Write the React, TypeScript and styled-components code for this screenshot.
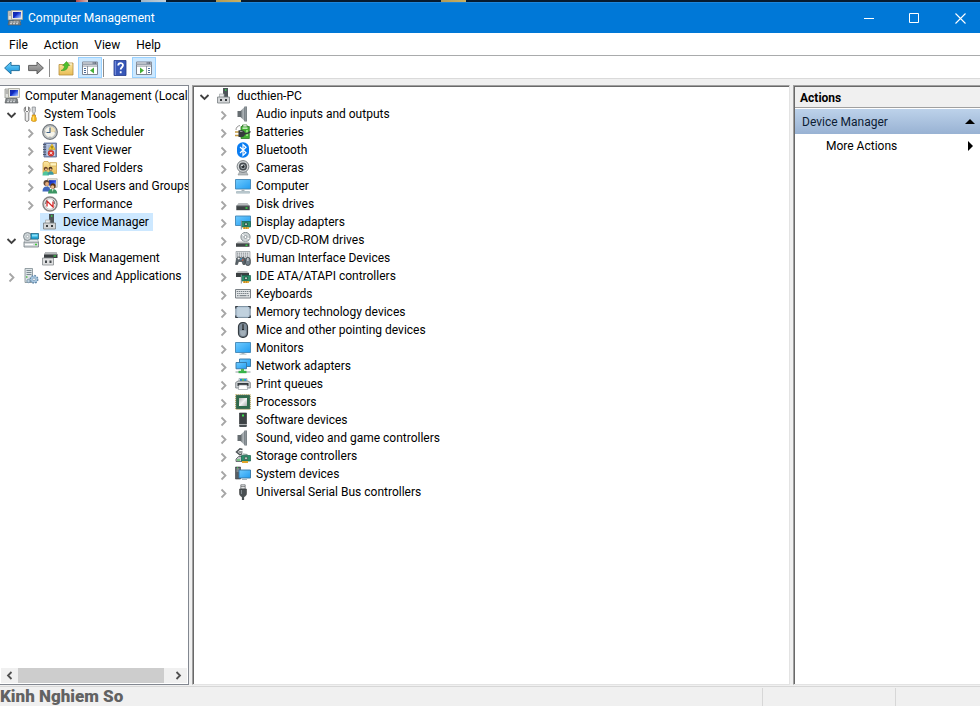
import React from "react";
import styled, { createGlobalStyle } from "styled-components";

const GlobalStyle = createGlobalStyle`
  * { box-sizing: border-box; }
  html, body { margin: 0; padding: 0; }
  body { font-family: Roboto, "Open Sans", sans-serif; font-size: 12px; line-height: 18px; color: #000; background: #f0f0f0; }
  button { font: inherit; color: inherit; background: none; border: 0; padding: 0; margin: 0; }
  ul { list-style: none; margin: 0; padding: 0; }
`;

/* ---------- icons ---------- */

const Svg = styled.svg<{ $w?: number; $h?: number }>`
  display: block;
  flex: none;
  width: ${(p) => p.$w ?? 16}px;
  height: ${(p) => p.$h ?? 16}px;
`;

const Icon = ({ children, w = 16, h = 16 }: { children: React.ReactNode; w?: number; h?: number }) => (
  <Svg viewBox={`0 0 ${w} ${h}`} $w={w} $h={h} aria-hidden="true">
    {children}
  </Svg>
);

const Defs = () => (
  <DefsSvg aria-hidden="true">
    <defs>
      <linearGradient id="screen" x1="0" y1="0" x2="1" y2="1">
        <stop offset="0" stopColor="#6fcbff" />
        <stop offset="1" stopColor="#229cf0" />
      </linearGradient>
      <linearGradient id="navy" x1="0" y1="0" x2="1" y2="1">
        <stop offset="0" stopColor="#0a1d9c" />
        <stop offset="0.5" stopColor="#2347dd" />
        <stop offset="1" stopColor="#b9d2ff" />
      </linearGradient>
      <linearGradient id="metal" x1="0" y1="0" x2="1" y2="0">
        <stop offset="0" stopColor="#5c6468" />
        <stop offset="0.6" stopColor="#b4babd" />
        <stop offset="1" stopColor="#7d858a" />
      </linearGradient>
      <linearGradient id="folder" x1="0" y1="0" x2="0" y2="1">
        <stop offset="0" stopColor="#fbe6a2" />
        <stop offset="1" stopColor="#e9bd55" />
      </linearGradient>
      <linearGradient id="bluearrow" x1="0" y1="0" x2="0" y2="1">
        <stop offset="0" stopColor="#74d3fa" />
        <stop offset="1" stopColor="#1291dd" />
      </linearGradient>
      <linearGradient id="greyarrow" x1="0" y1="0" x2="0" y2="1">
        <stop offset="0" stopColor="#b5b5b5" />
        <stop offset="1" stopColor="#777" />
      </linearGradient>
      <linearGradient id="chip" x1="0" y1="0" x2="1" y2="1">
        <stop offset="0" stopColor="#aeb2b2" />
        <stop offset="0.5" stopColor="#f2f2f2" />
        <stop offset="1" stopColor="#a8acac" />
      </linearGradient>
    </defs>
  </DefsSvg>
);
const DefsSvg = styled.svg`
  position: absolute;
  width: 0;
  height: 0;
`;

const ComputerMgmt = () => (
  <Icon>
    <path d="M1 1h4v9H1z" fill="#dfe0dc" stroke="#858781" strokeWidth=".7" />
    <path d="M1.800 3h2.400M1.800 5h2.400" stroke="#777" strokeWidth=".8" />
    <path d="M4.500.5h11v9h-11z" fill="#e8e8e2" stroke="#a6a69c" strokeWidth=".8" />
    <path d="M6 2h8v6H6z" fill="url(#navy)" />
    <path d="M9 2h3L7 8H6V6z" fill="#0c1fae" opacity=".6" />
    <path d="M7 10h6l1 2H6z" fill="#c5c6c0" />
    <path d="M2 10.500h11l1 4.500H1z" fill="#7d8285" stroke="#55595b" strokeWidth=".6" />
    <path d="M3.500 12h2M6.500 12h2M9.500 12h2M3 13.700h2M6 13.700h2M9 13.700h2" stroke="#e5e8ea" strokeWidth=".9" />
  </Icon>
);

const Tools = () => (
  <Icon>
    <path d="M2.500.8v3.700l1.500 1.500 1.500-1.500V.8c2 1 2 4.700.3 6v7.400c-.6 1.600-3 1.600-3.600 0V6.800C.7 5.500.7 1.800 2.500.8z" fill="#ececec" stroke="#747474" strokeWidth=".9" />
    <path d="M9.200 1h3.200v4.500l-.9 1.500v2.500h-1.300V7l-1-1.500z" fill="#d5d8da" stroke="#7e8387" strokeWidth=".7" />
    <path d="M9.300 9h3.200v2l.7.8v3c0 .8-4.600.8-4.600 0v-3l.7-.8z" fill="#f8bd20" stroke="#c58307" strokeWidth=".7" />
    <path d="M10.300 10.500v4" stroke="#ffe58a" />
  </Icon>
);

const Clock = () => (
  <Icon>
    <circle cx="8" cy="8" r="7.300" fill="#c9cdd0" stroke="#73787c" strokeWidth="1.200" />
    <circle cx="8" cy="8" r="5.600" fill="#f6f4ea" stroke="#99a0a4" strokeWidth=".5" />
    <path d="M8 8V2.600a5.400 5.400 0 0 1 5.400 5.400z" fill="#f0dfb3" />
    <path d="M8 3.500V8.500H4.500" stroke="#3c5f86" strokeWidth="1.100" fill="none" />
    <path d="M8 12.500v.8M12.500 8h.8M2.700 8h.8" stroke="#888" />
  </Icon>
);

const EventLog = () => (
  <Icon>
    <path d="M2 1h12.500v14H2z" fill="#8295bd" stroke="#5a6b91" strokeWidth=".8" />
    <path d="M4.500 2H13v12H4.500z" fill="#c3d1e8" />
    <path d="M5.500 4h4M5.500 6h3M5.500 8h3M5.500 10h2M5.500 12h2" stroke="#8090b0" strokeWidth=".8" />
    <path d="M1 2.500h3M1 5h3M1 7.500h3M1 10h3M1 12.500h3" stroke="#4e586d" strokeWidth="1" />
    <path d="M10 2l3.300 5.500H6.700z" fill="#f6cc2c" stroke="#c19512" strokeWidth=".5" />
    <path d="M10 4v2M10 6.500v.6" stroke="#3b3200" strokeWidth=".8" />
    <circle cx="9" cy="11.200" r="3" fill="#dc3a34" stroke="#9d2020" strokeWidth=".4" />
    <path d="M7.800 10l2.400 2.400M10.200 10l-2.400 2.400" stroke="#fff" strokeWidth=".9" />
  </Icon>
);

const SharedFolder = () => (
  <Icon>
    <path d="M1 3l1-1.500h4L7 3h7.500v10.500H1z" fill="url(#folder)" stroke="#c49a3d" strokeWidth=".7" />
    <path d="M8 2.700h6.500V6H8z" fill="#fff3bf" stroke="#c49a3d" strokeWidth=".6" />
    <circle cx="3.800" cy="8.800" r="2" fill="#6d4527" />
    <circle cx="8.500" cy="8.800" r="2" fill="#46301f" />
    <circle cx="4" cy="9.500" r="1.100" fill="#e9b98c" />
    <circle cx="8.700" cy="9.500" r="1.100" fill="#e9b98c" />
    <path d="M.5 15.500c0-3 1.300-4.200 3.300-4.200s3 1.200 3.200 4.200z" fill="#4fc59d" />
    <path d="M5.500 14.800c0-2.300 1.200-3.500 3.200-3.500s2.800 1.200 3 3.500z" fill="#3c99a0" />
  </Icon>
);

const Users = () => (
  <Icon>
    <path d="M5.500.8h9.700v8.500H5.500z" fill="#eceadf" stroke="#a4a296" strokeWidth=".7" />
    <path d="M7 2.200h7v5.500H7z" fill="url(#navy)" />
    <circle cx="4.500" cy="5" r="3" fill="#60493a" />
    <circle cx="5" cy="6" r="1.900" fill="#e8ae7e" />
    <circle cx="11" cy="8" r="2.700" fill="#5a3519" />
    <circle cx="10.600" cy="9" r="1.700" fill="#eebb8d" />
    <path d="M.5 13.500C.5 10 2 8.500 4.500 8.500s4 1.500 4 5z" fill="#4168bd" />
    <path d="M6 15.500c0-3.200 1.800-4.500 4.500-4.500s4.700 1.300 4.700 4.500z" fill="#3c9563" />
    <path d="M10 11h1.500l-.8 3z" fill="#f2f6df" />
  </Icon>
);

const Perf = () => (
  <Icon>
    <circle cx="8" cy="8" r="7" fill="#f7f7f7" stroke="#858585" strokeWidth="1.500" />
    <circle cx="8" cy="8" r="5.300" fill="#fff" stroke="#9d9d9d" strokeWidth=".6" />
    <path d="M5 10.500V5l6 6V5.500" fill="none" stroke="#d42525" strokeWidth="1.300" />
    <path d="M3.500 8A5 5 0 0 1 5 4.500M12.500 8A5 5 0 0 0 11 4" fill="none" stroke="#444" strokeWidth=".7" />
  </Icon>
);

const DevMgr = () => (
  <Icon>
    <path d="M7.500 0H12v9H7.500z" fill="#4e5559" />
    <path d="M9 1.200h1.400v1.500H9z" fill="#39e24b" />
    <path d="M7.500 0v9" stroke="#2e3336" strokeWidth=".7" />
    <path d="M3.500 6H8v3.500H3.500z" fill="#e8e9ea" stroke="#a2a7ab" strokeWidth=".7" />
    <path d="M1.500 9H13.500v6H1.500z" fill="#d4d6d8" stroke="#777d81" strokeWidth=".8" />
    <path d="M4 11h2v2H4zM9 11h2v2H9z" fill="#383c3f" />
  </Icon>
);

const StorageIcon = () => (
  <Icon>
    <path d="M1 10h14.500v5H1z" fill="#d6dadd" stroke="#727b81" strokeWidth=".8" />
    <path d="M1 10l1.500-3h12l1 3z" fill="#e7eaec" stroke="#8d959a" strokeWidth=".6" />
    <path d="M12 12.500h2" stroke="#40cc39" strokeWidth="1.300" />
    <path d="M2 12.500h8" stroke="#fff" />
    <circle cx="4.500" cy="4.500" r="4" fill="#ccd3d6" stroke="#6c767b" strokeWidth=".8" />
    <circle cx="4.500" cy="4.500" r="1.200" fill="#fff" stroke="#8e999e" strokeWidth=".6" />
    <path d="M8 1.500h7.500v5.500H8z" fill="#27a7d8" stroke="#1f6887" strokeWidth=".8" />
    <path d="M9 2.500h5.500v2H9z" fill="#8ce0f9" />
  </Icon>
);

const DiskMgmt = () => (
  <Icon>
    <path d="M2 4.500L4 2h10l1.500 2.500V8H2z" fill="#393e40" />
    <path d="M2 4.500L4 2h10l1.500 2.500z" fill="#b5b8ba" />
    <path d="M11.500 6h2.500" stroke="#3dd64b" strokeWidth="1.200" />
    <path d="M.5 8H11.500v7H.5z" fill="#dfe0e1" stroke="#858a8d" strokeWidth=".8" />
    <path d="M3 10.500h2V13H3zM7.500 10.500h2V13h-2z" fill="#44494c" />
  </Icon>
);

const Services = () => (
  <Icon>
    <path d="M2 .5h7.500v14H2z" fill="#dce3e6" stroke="#7e8b91" strokeWidth=".8" />
    <path d="M3.500 2.500h5M3.500 4.500h5M3.500 6.500h5" stroke="#708188" strokeWidth=".9" />
    <path d="M3 9h1.500" stroke="#55b84b" strokeWidth="1.300" />
    <circle cx="11" cy="11.300" r="3.600" fill="#9bbbd7" stroke="#6288a8" strokeWidth="1.800" strokeDasharray="1.600 1.200" />
    <circle cx="11" cy="11.300" r="3" fill="#a8c7e0" />
    <circle cx="11" cy="11.300" r="1.300" fill="#fff" stroke="#6488a4" strokeWidth=".6" />
    <circle cx="5.500" cy="13" r="1.700" fill="#c0d2df" stroke="#7694aa" strokeWidth=".9" />
  </Icon>
);

const Speaker = () => (
  <Icon>
    <path d="M2.500 5h3.500v6H2.500z" fill="#666d71" />
    <path d="M5.500 5L10 .5v15L5.500 11z" fill="url(#metal)" />
    <path d="M9.500 .5H12v15H9.500z" fill="#71797e" />
    <path d="M10.800 1v14" stroke="#a5acb0" strokeWidth=".8" />
  </Icon>
);

const Battery = () => (
  <Icon>
    <path d="M7.500 1h4.500v1.500h2.300V14.500H6V2.500h1.500z" fill="#43b134" stroke="#2e7a27" strokeWidth=".8" />
    <path d="M8.300 1h3.400v1.600H8.300z" fill="#d5dbd4" />
    <path d="M7.500 3.500h5v1.300h-5z" fill="#e2f9da" />
    <path d="M11 6h2v6h-2z" fill="#8ee376" />
    <path d="M1 6C1 3.500 2.500 2 5 1.500" stroke="#777" fill="none" strokeWidth=".8" />
    <path d="M0 8h4M0 11.500h4" stroke="#c39a42" strokeWidth="1.400" />
    <path d="M3.500 6.300H7c2 0 3 1.500 3 3.400s-1 3.300-3 3.300H3.500z" fill="#363b3d" />
    <path d="M9.500 9.500c2 .5 3.500 0 6-2" stroke="#363b3d" strokeWidth="1.600" fill="none" />
    <path d="M5 7.500h2.500" stroke="#92989a" />
  </Icon>
);

const Bluetooth = () => (
  <Icon>
    <rect x="2" y=".2" width="12" height="15.600" rx="5.800" fill="#0a7df2" />
    <path d="M5 5l6 5.800L8 13.500v-11l3 2.700L5 11" fill="none" stroke="#fff" strokeWidth="1.200" />
  </Icon>
);

const Camera = () => (
  <Icon>
    <path d="M5 11h6l2 4H3z" fill="#b8bcbe" stroke="#888e91" strokeWidth=".6" />
    <circle cx="8" cy="6.500" r="5.900" fill="#d4d7d9" stroke="#70777b" strokeWidth=".9" />
    <circle cx="8" cy="6.500" r="4" fill="#474d51" />
    <circle cx="8" cy="6.500" r="2.500" fill="#9ba3a8" />
    <circle cx="8" cy="6.500" r="1.500" fill="#22272a" />
    <circle cx="7" cy="5.500" r=".8" fill="#fff" />
  </Icon>
);

const Monitor = () => (
  <Icon>
    <path d="M.5 2.500h15v10H.5z" fill="url(#screen)" stroke="#4186b5" strokeWidth=".9" />
    <path d="M6.500 13h3v1h-3z" fill="#a7b1b6" />
    <path d="M4.500 14.200h7" stroke="#aebbc1" strokeWidth=".9" />
  </Icon>
);
const Desktop = () => (
  <Icon>
    <path d="M.5 1.500h15v9.500H.5z" fill="url(#screen)" stroke="#4186b5" strokeWidth=".9" />
    <path d="M6.500 11.500h3v1.500h-3z" fill="#a7b1b6" />
    <path d="M1.500 13.500h13v1.700h-13z" fill="#c2ced4" stroke="#88a0ab" strokeWidth=".5" />
  </Icon>
);

const Disk = () => (
  <Icon>
    <path d="M1.300 10L3.500 7h9l2.200 3z" fill="#b8bbbd" />
    <path d="M1.300 9.700h13.400v4.500H1.300z" fill="#3d4244" />
    <path d="M1.500 9.900h13" stroke="#737a7d" strokeWidth=".7" />
    <path d="M10.500 12h2" stroke="#32e842" strokeWidth="1.400" />
  </Icon>
);

const Board = () => (
  <>
    <path d="M6.500 7.500h9v5.500h-9z" fill="#2c8f6b" stroke="#17604a" strokeWidth=".7" />
    <path d="M9.500 9h3v2.500h-3z" fill="#b9c6c0" stroke="#114635" strokeWidth=".7" />
    <path d="M6.300 6.500v9" stroke="#879198" strokeWidth="1" />
    <path d="M8 14h6" stroke="#e1a52d" strokeWidth="1.800" />
    <path d="M9.500 13v2M11.500 13v2" stroke="#a46d11" strokeWidth=".5" />
  </>
);
const Display = () => (
  <Icon>
    <path d="M.5 2h15v9.500H.5z" fill="url(#screen)" stroke="#4186b5" strokeWidth=".9" />
    <Board />
  </Icon>
);
const Dvd = () => (
  <Icon>
    <circle cx="10.500" cy="5" r="4.600" fill="#d0d5d7" stroke="#7b8488" strokeWidth=".9" />
    <path d="M10.500 5L7 2.200M10.500 5l4 2" stroke="#fff" />
    <circle cx="10.500" cy="5" r="1.500" fill="#fff" stroke="#838d92" strokeWidth=".8" />
    <path d="M1 11.500L3 9.500h10l2 2z" fill="#bfc2c3" />
    <path d="M1 11.300h13.500v3.500H1z" fill="#414648" />
    <path d="M10.500 13.200h2" stroke="#36e946" strokeWidth="1.300" />
  </Icon>
);
const Hid = () => (
  <Icon>
    <path d="M1 1.500h14v7H1z" fill="#dfe2e4" stroke="#8f979b" strokeWidth=".7" />
    <path d="M2 3.200h12M2 5h12M2 6.800h12" stroke="#6c7478" strokeWidth=".8" strokeDasharray="1.200 .8" />
    <path d="M.5 14.500l1-6 2-1.500 3 1 2-1 1.500 2v5.500H8l-1-3H3.500l-1 3z" fill="#5c666d" stroke="#353c40" strokeWidth=".6" />
    <path d="M2.700 8.500h2M3.700 7.500v2" stroke="#fff" strokeWidth=".8" />
    <circle cx="6" cy="9" r=".8" fill="#45aaf1" />
    <circle cx="7.700" cy="10" r=".8" fill="#e35d3c" />
    <rect x="10.500" y="7.500" width="4.800" height="8" rx="2.300" fill="#73808a" stroke="#363c40" strokeWidth=".8" />
    <path d="M12.900 8v3" stroke="#e5e8e9" />
  </Icon>
);
const Ide = () => (
  <Icon>
    <path d="M1 5L3 3h9l2 2z" fill="#bcbfc0" />
    <path d="M1 5h13v4H1z" fill="#3a3f41" />
    <Board />
  </Icon>
);
const Keyboard = () => (
  <Icon>
    <path d="M.5 3.500h15v8.500H.5z" fill="#e3e6e8" stroke="#6d757b" strokeWidth=".9" />
    <path d="M1.700 5.500h13M2.200 7.500h12" stroke="#69737a" strokeWidth="1" strokeDasharray="1.200 .8" />
    <path d="M2 9.700h1.500M4.500 9.700h7M12.500 9.700H14" stroke="#69737a" strokeWidth="1" />
  </Icon>
);
const Memory = () => (
  <Icon>
    <rect x=".8" y="2.500" width="14.400" height="11" rx="1.200" fill="#b7c9d8" stroke="#758a9c" strokeWidth=".9" />
    <path d="M.8 4.500V2.500h2M13.200 2.500h2v2M.8 11.500v2h2M13.200 13.500h2v-2" fill="none" stroke="#343b42" strokeWidth="1.200" />
    <path d="M2.500 4h11v8h-11z" fill="#c0d1de" />
  </Icon>
);
const Mouse = () => (
  <Icon>
    <rect x="3.500" y=".7" width="9" height="14.600" rx="4" fill="#7e8c99" stroke="#353c42" strokeWidth="1.200" />
    <path d="M5 8.500h6c0 3.700-.8 5.500-3 5.500s-3-1.800-3-5.500z" fill="#a2afb9" />
    <path d="M8 2.500V8" stroke="#252b2f" strokeWidth="2" />
    <path d="M8 3v4" stroke="#9ea8af" strokeWidth=".6" />
  </Icon>
);
const Network = () => (
  <Icon>
    <path d="M4.500 1h11v7.500h-11z" fill="url(#screen)" stroke="#3475a3" strokeWidth=".9" />
    <path d="M1 4.500h10.500v6.300H1z" fill="url(#screen)" stroke="#3475a3" strokeWidth=".9" />
    <path d="M7.500 11v2" stroke="#51b84f" strokeWidth="3" />
    <path d="M.5 14h15" stroke="#b9c1c3" strokeWidth="1.600" />
    <path d="M3.500 14h8" stroke="#36b34a" strokeWidth="2.400" />
  </Icon>
);
const Printer = () => (
  <Icon>
    <path d="M4 2.500h8V6H4z" fill="#d6eef9" stroke="#859298" strokeWidth=".6" />
    <path d="M5 3h2v2.500H5z" fill="#1a8cda" />
    <path d="M7 3h2v2.500H7z" fill="#63c94c" />
    <path d="M9 3h2.500v2.500H9z" fill="#1aa0e7" />
    <path d="M.7 6.500L3 5h10l2.300 1.500v5.500H.7z" fill="#d0d4d6" stroke="#71797d" strokeWidth=".8" />
    <path d="M2.500 7h11v3h-11z" fill="#353b3f" />
    <path d="M4 9h8l.7 4.500H3.300z" fill="#fff" stroke="#848b90" strokeWidth=".6" />
  </Icon>
);
const Cpu = () => (
  <Icon>
    <path d="M.7 .7h14.600v14.600H.7z" fill="none" stroke="#c3a545" strokeWidth="1" strokeDasharray="1 1" />
    <path d="M1.300 1.300h13.400v13.400H1.300z" fill="#2f6b4b" stroke="#204e37" strokeWidth=".7" />
    <path d="M4 4h8v8H4z" fill="url(#chip)" />
  </Icon>
);
const Software = () => (
  <Icon>
    <path d="M4.500 1h7v11h-7z" fill="#3d4245" stroke="#25292b" strokeWidth=".6" />
    <path d="M7 2.500h2v2H7z" fill="#3ee04e" />
    <path d="M4 12.800h8L11.500 15h-7z" fill="#4a5053" />
    <path d="M4.500 12.400h7" stroke="#aeb3b5" strokeWidth=".8" />
  </Icon>
);
const StorageCtl = () => (
  <Icon>
    <path d="M7.500 1.500L5 .8 1.500 4 5 6.800l2-1.200" fill="none" stroke="#4f5558" strokeWidth="1.500" />
    <path d="M3.500 4h4" stroke="#4f5558" strokeWidth="1.200" />
    <path d="M1 11l2.500-2.500h4L9 11v2.500H1z" fill="#bec4c6" stroke="#50575a" strokeWidth=".8" />
    <path d="M2 12h3" stroke="#32c43f" />
    <path d="M6.500 7.500h9v5.500h-9z" fill="#2c8f6b" stroke="#17604a" strokeWidth=".7" />
    <path d="M9.500 9h3v2.500h-3zM7.500 6l5 .5" fill="#b9c6c0" stroke="#365a4e" strokeWidth=".7" />
    <path d="M7 14h6" stroke="#e1a52d" strokeWidth="2" />
  </Icon>
);
const SystemDev = () => (
  <Icon>
    <path d="M.5 1h5v12h-5z" fill="#575f64" stroke="#353b3f" strokeWidth=".6" />
    <path d="M1.500 3H4.500M1.500 5H4" stroke="#b9c0c3" strokeWidth=".8" />
    <path d="M2 1.800h1" stroke="#42e34f" />
    <path d="M4 4h11.500v8H4z" fill="url(#screen)" stroke="#3475a3" strokeWidth=".9" />
    <path d="M7 13.500h5" stroke="#a8b7bf" />
  </Icon>
);
const Usb = () => (
  <Icon>
    <path d="M5.800.8h4.400V5H5.800z" fill="#e2e4e5" stroke="#697074" strokeWidth=".8" />
    <path d="M7 2v1M9 2v1" stroke="#444" />
    <path d="M4.500 5h7v4.500c0 1.800-1.200 2.800-2.300 3.200H6.800C5.700 12.300 4.500 11.300 4.500 9.500z" fill="#4a5053" stroke="#333" strokeWidth=".5" />
    <path d="M8 12v4" stroke="#4a5053" strokeWidth="2.200" />
    <path d="M6.500 6v4" stroke="#899196" strokeWidth=".9" />
  </Icon>
);

const Back = () => (
  <Icon>
    <path d="M.6 8L7 2v3.400h8.400v5.200H7V14z" fill="url(#bluearrow)" stroke="#2372a0" strokeWidth="1" strokeLinejoin="round" />
  </Icon>
);
const Forward = () => (
  <Icon>
    <path d="M15.400 8L9 2v3.400H.6v5.200H9V14z" fill="url(#greyarrow)" stroke="#606060" strokeWidth="1" strokeLinejoin="round" />
  </Icon>
);
const FolderUp = () => (
  <Icon>
    <path d="M1 4.500h6L8.500 3H15v12H1z" fill="url(#folder)" stroke="#b58d3a" strokeWidth=".8" />
    <path d="M9.500 4h4.500" stroke="#f3f3e7" />
    <path d="M3 10.500c2.500-1 3.500-2.500 3.500-5H4.700L8.500 1.500l3.300 4H10c0 3.500-2.500 5.500-7 5z" fill="#4ec02d" stroke="#2e8c1c" strokeWidth=".5" />
  </Icon>
);
const WindowTree = ({ right }: { right?: boolean }) => (
  <Icon>
    <path d="M.5 2h15v12.500H.5z" fill="#fff" stroke="#7d8592" strokeWidth="1" />
    <path d="M.5 2h15v3H.5z" fill="#9ba3b0" />
    <path d="M1 3h9M1 6.500h14" stroke="#e8ebef" strokeWidth=".8" />
    <path d="M11.500 3h3" stroke="#3d4754" strokeWidth="1" strokeDasharray="1 .5" />
    <path d="M1 6h14" stroke="#7d8592" strokeWidth=".8" />
    {right ? (
      <>
        <path d="M10.500 6v8.500" stroke="#7d8592" strokeWidth=".8" />
        <path d="M12 8.500h2M12 10.500h2M12 12.500h2" stroke="#4a6a99" />
        <path d="M4 7.500l4 3-4 3z" fill="#44ae35" />
      </>
    ) : (
      <>
        <path d="M5.500 6v8.500" stroke="#7d8592" strokeWidth=".8" />
        <path d="M2 8.500h2M2 10.500h2M2 12.500h2" stroke="#4a6a99" />
        <path d="M12 7.500l-4 3 4 3z" fill="#44ae35" />
      </>
    )}
  </Icon>
);
const HelpGlyph = () => (
  <Icon>
    <path d="M2 .5h12v15H2z" fill="#3757b8" stroke="#21398c" strokeWidth=".8" />
    <path d="M3.300 1v14" stroke="#8097e0" strokeWidth="1" />
    <path d="M6.200 5.500c0-3.200 4.800-3.200 4.800-.2 0 2-2.300 1.900-2.300 4.200M8.700 11.200v2" fill="none" stroke="#fff" strokeWidth="1.800" />
  </Icon>
);

const Chevron = ({ open }: { open?: boolean }) => (
  <Icon w={11} h={12}>
    {open ? (
      <path d="M1.500 4l4 4 4-4" fill="none" stroke="#404040" strokeWidth="1.800" />
    ) : (
      <path d="M3.500 2.500l4 4-4 4" fill="none" stroke="#a6a6a6" strokeWidth="1.800" />
    )}
  </Icon>
);

/* ---------- layout ---------- */

const Window = styled.div`
  display: flex;
  flex-direction: column;
  height: 100vh;
  min-width: 640px;
  overflow: hidden;
`;

const DesktopEdge = styled.div`
  flex: none;
  height: 2px;
  background: linear-gradient(
    90deg,
    #061b30 76px, #b84b4b 76px, #d7b6b0 88px, #061b30 88px,
    #061b30 141px, #9fb4c4 141px, #c5d0d8 166px, #061b30 166px,
    #061b30 216px, #b39a55 216px, #c9b062 241px, #061b30 241px,
    #061b30 441px, #b39a55 441px, #c9b062 466px, #061b30 466px
  );
`;

const TitleBar = styled.header`
  flex: none;
  display: flex;
  align-items: center;
  height: 31px;
  padding-left: 7px;
  color: #fff;
  background: #0078d7;
  border-top: 1px solid #1b86dc;
`;
const Title = styled.h1`
  flex: 1;
  margin: 0 0 0 5px;
  font-size: 12px;
  font-weight: 400;
`;
const CaptionButton = styled.button`
  display: flex;
  align-items: center;
  justify-content: center;
  width: 45px;
  height: 30px;
  &:last-child { width: 43px; padding-left: 3px; }
  &:hover { background: #1a86db; }
`;

const MenuBar = styled.nav`
  flex: none;
  display: flex;
  height: 23px;
  padding: 2px 0 0 1px;
  background: #fff;
  border-bottom: 1px solid #a9abac;
`;
const MenuItem = styled.button`
  padding: 0 8px;
  &:hover { background: #cce8ff; }
`;

const ToolBar = styled.div`
  flex: none;
  display: flex;
  align-items: center;
  height: 23px;
  padding-top: 1px;
  background: #fff;
  border-bottom: 1px solid #dadada;
`;
const ToolButton = styled.button<{ $active?: boolean }>`
  display: flex;
  align-items: center;
  justify-content: center;
  width: 24px;
  height: 21px;
  border: 1px solid ${(p) => (p.$active ? "#99d1ff" : "transparent")};
  background: ${(p) => (p.$active ? "#cce8ff" : "transparent")};
`;
const ToolSeparator = styled.div`
  width: 1px;
  height: 18px;
  margin: 0 4px 0 1px;
  background: #8c8c8c;
`;

const Panes = styled.main`
  flex: 1;
  display: flex;
  gap: 3px;
  min-height: 0;
  padding-top: 6px;
`;
const Pane = styled.section`
  display: flex;
  flex-direction: column;
  min-width: 0;
  background: #fff;
`;
const TreePane = styled(Pane)`
  flex: none;
  width: 189px;
  border: solid #828790;
  border-width: 1px 1px 1px 0;
`;
const SunkenPane = styled(Pane)`
  border: 1px solid;
  border-color: #a0a0a0 #e3e3e3 #e3e3e3 #a0a0a0;
  box-shadow: inset 1px 1px #696969;
  padding: 1px 0 0 1px;
`;
const DevicePane = styled(SunkenPane)`
  flex: 1;
`;
const ActionPane = styled(SunkenPane)`
  flex: none;
  width: 187px;
  border-right: 0;
`;

const TreeList = styled.ul<{ $inset: number; $top: number }>`
  flex: 1;
  min-height: 0;
  overflow: hidden;
  padding: ${(p) => p.$top}px 0 0 ${(p) => p.$inset}px;
`;
const TreeRow = styled.li<{ $level: number }>`
  display: flex;
  height: 18px;
  padding-left: ${(p) => p.$level * 19}px;
  white-space: nowrap;
`;
const Toggle = styled.button`
  flex: none;
  display: flex;
  align-items: center;
  justify-content: center;
  width: 19px;
  height: 18px;
  padding: 1px 1px 0 0;
`;
const Node = styled.button<{ $selected?: boolean }>`
  flex: none;
  display: flex;
  align-items: center;
  gap: 5px;
  height: 18px;
  padding: 0 4px 0 2px;
  background: ${(p) => (p.$selected ? "#cde8ff" : "transparent")};
`;

const ScrollBar = styled.div`
  flex: none;
  display: flex;
  height: 15px;
  margin: 0 1px 1px;
  background: #f0f0f0;
`;
const ScrollButton = styled.button`
  display: flex;
  align-items: center;
  justify-content: center;
  width: 17px;
`;
const ScrollTrack = styled.div`
  flex: 1;
`;
const ScrollThumb = styled.div`
  width: 96%;
  height: 100%;
  background: #cdcdcd;
`;

const ActionsHeading = styled.h2`
  margin: 0;
  padding: 2px 5px 0;
  height: 21px;
  font-size: 12px;
  font-weight: 700;
  background: #f0f0f0;
  border-bottom: 1px solid #a0a0a0;
`;
const ActionGroup = styled.button`
  display: flex;
  align-items: center;
  justify-content: space-between;
  height: 25px;
  margin-top: 1px;
  padding: 0 5px 0 7px;
  color: #0d1c33;
  background: linear-gradient(#bdd2ea, #98b2d3);
`;
const ActionItem = styled.button`
  display: flex;
  align-items: center;
  justify-content: space-between;
  height: 24px;
  padding: 0 7px 0 31px;
`;

const StatusBar = styled.footer`
  flex: none;
  display: flex;
  height: 20px;
  margin-top: 1px;
  border-top: 1px solid #d7d7d7;
  background: #f0f0f0;
`;
const StatusCell = styled.div<{ $width?: number }>`
  ${(p) => (p.$width ? `flex: none; width: ${p.$width}px;` : "flex: 1;")}
  margin-top: ${(p) => (p.$width ? 1 : 0)}px;
  border-left: ${(p) => (p.$width ? "1px solid #d7d7d7" : "0")};
`;
const SiteMark = styled.strong`
  display: block;
  font: 900 17px/18px Roboto, sans-serif;
  color: #626262;
  white-space: nowrap;
`;

/* ---------- data ---------- */

type Item = { label: string; icon: React.FC; level: number; state?: "open" | "closed"; selected?: boolean };

const consoleTree: Item[] = [
  { label: "Computer Management (Local", icon: ComputerMgmt, level: 0 },
  { label: "System Tools", icon: Tools, level: 1, state: "open" },
  { label: "Task Scheduler", icon: Clock, level: 2, state: "closed" },
  { label: "Event Viewer", icon: EventLog, level: 2, state: "closed" },
  { label: "Shared Folders", icon: SharedFolder, level: 2, state: "closed" },
  { label: "Local Users and Groups", icon: Users, level: 2, state: "closed" },
  { label: "Performance", icon: Perf, level: 2, state: "closed" },
  { label: "Device Manager", icon: DevMgr, level: 2, selected: true },
  { label: "Storage", icon: StorageIcon, level: 1, state: "open" },
  { label: "Disk Management", icon: DiskMgmt, level: 2 },
  { label: "Services and Applications", icon: Services, level: 1, state: "closed" },
];

const device = (label: string, icon: React.FC): Item => ({ label, icon, level: 1, state: "closed" });
const deviceTree: Item[] = [
  { label: "ducthien-PC", icon: DevMgr, level: 0, state: "open" },
  device("Audio inputs and outputs", Speaker),
  device("Batteries", Battery),
  device("Bluetooth", Bluetooth),
  device("Cameras", Camera),
  device("Computer", Desktop),
  device("Disk drives", Disk),
  device("Display adapters", Display),
  device("DVD/CD-ROM drives", Dvd),
  device("Human Interface Devices", Hid),
  device("IDE ATA/ATAPI controllers", Ide),
  device("Keyboards", Keyboard),
  device("Memory technology devices", Memory),
  device("Mice and other pointing devices", Mouse),
  device("Monitors", Monitor),
  device("Network adapters", Network),
  device("Print queues", Printer),
  device("Processors", Cpu),
  device("Software devices", Software),
  device("Sound, video and game controllers", Speaker),
  device("Storage controllers", StorageCtl),
  device("System devices", SystemDev),
  device("Universal Serial Bus controllers", Usb),
];

const Tree = ({ items, rootToggle, inset, top, label }: { items: Item[]; rootToggle: boolean; inset: number; top: number; label: string }) => (
  <TreeList $inset={inset} $top={top} aria-label={label}>
    {items.map(({ label: text, icon: Glyph, level, state, selected }) => {
      const depth = rootToggle ? level : Math.max(level - 1, 0);
      return (
        <TreeRow key={text} $level={depth}>
          {(rootToggle || level > 0) && (
            <Toggle aria-label={state ? `Toggle ${text}` : undefined} aria-hidden={!state} disabled={!state}>
              {state && <Chevron open={state === "open"} />}
            </Toggle>
          )}
          <Node $selected={selected}>
            <Glyph />
            <span>{text}</span>
          </Node>
        </TreeRow>
      );
    })}
  </TreeList>
);

export default function App() {
  return (
    <Window>
      <GlobalStyle />
      <Defs />
      <DesktopEdge />
      <TitleBar>
        <ComputerMgmt />
        <Title>Computer Management</Title>
        <CaptionButton aria-label="Minimize">
          <Icon w={11} h={11}><path d="M0 5.500h10" stroke="#fff" /></Icon>
        </CaptionButton>
        <CaptionButton aria-label="Maximize">
          <Icon w={11} h={11}><path d="M.5 .5h9v9h-9z" fill="none" stroke="#fff" /></Icon>
        </CaptionButton>
        <CaptionButton aria-label="Close">
          <Icon w={11} h={11}><path d="M.5.5l10 10M10.500.5l-10 10" stroke="#fff" strokeWidth="1.100" /></Icon>
        </CaptionButton>
      </TitleBar>
      <MenuBar aria-label="Menu">
        {["File", "Action", "View", "Help"].map((m) => <MenuItem key={m}>{m}</MenuItem>)}
      </MenuBar>
      <ToolBar>
        <ToolButton aria-label="Back"><Back /></ToolButton>
        <ToolButton aria-label="Forward"><Forward /></ToolButton>
        <ToolSeparator />
        <ToolButton aria-label="Up one level"><FolderUp /></ToolButton>
        <ToolButton aria-label="Show or hide console tree" $active><WindowTree /></ToolButton>
        <ToolSeparator />
        <ToolButton aria-label="Help"><HelpGlyph /></ToolButton>
        <ToolButton aria-label="Show or hide action pane" $active><WindowTree right /></ToolButton>
      </ToolBar>
      <Panes>
        <TreePane>
          <Tree items={consoleTree} rootToggle={false} inset={2} top={1} label="Console tree" />
          <ScrollBar>
            <ScrollButton aria-label="Scroll left">
              <Icon w={9} h={9}><path d="M6.500 1L3 4.500 6.500 8" fill="none" stroke="#505050" strokeWidth="1.800" /></Icon>
            </ScrollButton>
            <ScrollTrack><ScrollThumb /></ScrollTrack>
            <ScrollButton aria-label="Scroll right">
              <Icon w={9} h={9}><path d="M2.500 1L6 4.500 2.500 8" fill="none" stroke="#505050" strokeWidth="1.800" /></Icon>
            </ScrollButton>
          </ScrollBar>
        </TreePane>
        <DevicePane>
          <Tree items={deviceTree} rootToggle inset={1} top={0} label="Devices" />
        </DevicePane>
        <ActionPane>
          <ActionsHeading>Actions</ActionsHeading>
          <ActionGroup>
            <span>Device Manager</span>
            <Icon w={10} h={5}><path d="M0 5l5-5 5 5z" fill="#000" /></Icon>
          </ActionGroup>
          <ActionItem>
            <span>More Actions</span>
            <Icon w={5} h={10}><path d="M0 0l5 5-5 5z" fill="#000" /></Icon>
          </ActionItem>
        </ActionPane>
      </Panes>
      <StatusBar>
        <StatusCell><SiteMark>Kinh Nghiem So</SiteMark></StatusCell>
        <StatusCell $width={133} />
        <StatusCell $width={85} />
      </StatusBar>
    </Window>
  );
}
